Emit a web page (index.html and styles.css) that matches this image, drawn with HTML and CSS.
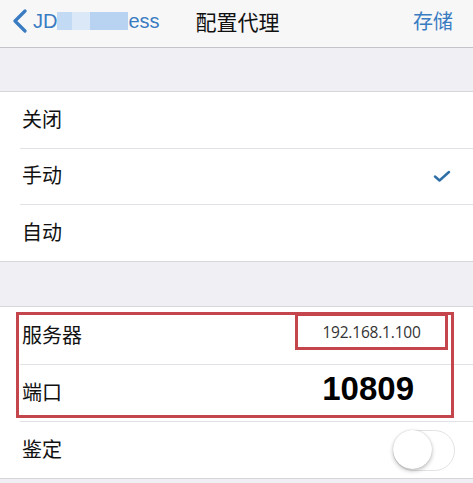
FILE: index.html
```html
<!DOCTYPE html>
<html lang="zh">
<head>
<meta charset="utf-8">
<title>配置代理</title>
<link rel="stylesheet" href="styles.css">
</head>
<body>
<div class="screen">
  <header class="nav">
    <div class="back">
      <svg class="chev" width="16" height="24" viewBox="0 0 16 24"><path d="M13 2 L3 12 L13 22" fill="none" stroke="#3a7cc2" stroke-width="3.2" stroke-linecap="round" stroke-linejoin="round"/></svg>
      <span class="back-text">JD</span><span class="blur b1"></span><span class="blur b2"></span><span class="blur b3"></span><span class="back-text">ess</span>
    </div>
    <div class="title">配置代理</div>
    <div class="save">存储</div>
  </header>
  <div class="spacer"></div>
  <section class="group g1">
    <div class="row"><span class="label">关闭</span></div>
    <div class="row"><span class="label">手动</span>
      <svg class="check" width="18" height="12" viewBox="0 0 18 12"><path d="M2 6.5 L6.5 10.5 L16 2" fill="none" stroke="#2e6fa8" stroke-width="2.4" stroke-linecap="round" stroke-linejoin="round"/></svg>
    </div>
    <div class="row tall"><span class="label">自动</span></div>
  </section>
  <div class="spacer s2"></div>
  <section class="group marked">
    <div class="row"><span class="label">服务器</span><span class="ip">192.168.1.100</span></div>
    <div class="row"><span class="label">端口</span><span class="port">10809</span></div>
    <div class="row"><span class="label">鉴定</span><span class="toggle"><span class="knob"></span></span></div>
    <div class="redbox"></div>
  </section>
  <div class="tail"></div>
</div>
</body>
</html>
```
FILE: styles.css
```css
* { box-sizing: border-box; }
html, body { margin: 0; padding: 0; }
body {
  width: 473px;
  height: 483px;
  overflow: hidden;
  background: #efeff4;
  font-family: "Noto Sans CJK SC", "Noto Sans", sans-serif;
  color: #111;
}
.screen { display: flex; flex-direction: column; }
.nav {
  height: 48px;
  background: #f7f7f8;
  border-bottom: 1px solid #c4c4c8;
  display: flex;
  align-items: center;
  padding: 0 20px 6px 12px;
  position: relative;
}
.back { display: flex; align-items: center; flex: 1; }
.chev { margin-right: 5px; margin-top: 1px; }
.back-text {
  font-family: "Liberation Sans", Arial, sans-serif;
  font-size: 20px;
  color: #3a7cc2;
  line-height: 20px;
}
.blur { display: inline-block; height: 18px; }
.b1 { width: 15px; background: #c3daf4; }
.b2 { width: 18px; background: #dae8f8; }
.b3 { width: 38px; background: #b8d2f1; }
.title {
  position: absolute;
  left: 2px; right: 0; top: 9px;
  text-align: center;
  font-size: 21px;
  line-height: 24px;
  color: #111;
}
.save { font-size: 20px; color: #3a7cc2; line-height: 24px; }
.spacer { height: 44px; border-bottom: 1px solid #d6d6da; }
.spacer.s2 { height: 45px; }
.group { background: #fff; position: relative; border-bottom: 1px solid #d6d6da; }
.row {
  height: 57px;
  display: flex;
  align-items: center;
  justify-content: space-between;
  padding: 0 21px 0 22px;
  position: relative;
}
.g1 .row { height: 56px; }
.g1 .row.tall { height: 57px; }
.row + .row::before {
  content: "";
  position: absolute;
  left: 20px; right: 0; top: 0;
  border-top: 1px solid #e2e2e6;
}
.label { font-size: 20px; line-height: 24px; margin-top: -2px; }
.check { margin-right: 1px; }
.ip {
  width: 153px;
  height: 37px;
  border: 3px solid #c4464c;
  display: flex;
  align-items: center;
  justify-content: center;
  font-family: "Open Sans", "Liberation Sans", sans-serif;
  font-size: 15.5px;
  color: #333;
  margin-right: 4px;
  margin-top: -8px;
  letter-spacing: -0.2px;
}
.port {
  font-family: "Liberation Sans", Arial, sans-serif;
  font-weight: bold;
  font-size: 33px;
  color: #000;
  margin-right: 38px;
  margin-top: -8px;
}
.toggle {
  width: 62px;
  height: 41px;
  border-radius: 21px;
  border: 1.5px solid #e3e3e6;
  background: #fff;
  position: relative;
  margin-right: -3px;
  margin-top: 2px;
}
.knob {
  position: absolute;
  left: -1px; top: -1px;
  width: 39px; height: 39px;
  border-radius: 50%;
  background: #fff;
  box-shadow: 0 2px 4px rgba(0,0,0,0.25), 0 0 1px rgba(0,0,0,0.25);
}
.redbox {
  position: absolute;
  left: 16px; top: 5px;
  width: 438px; height: 106px;
  border: 3px solid #c4464c;
  pointer-events: none;
}
.tail { flex: 1; }
```
